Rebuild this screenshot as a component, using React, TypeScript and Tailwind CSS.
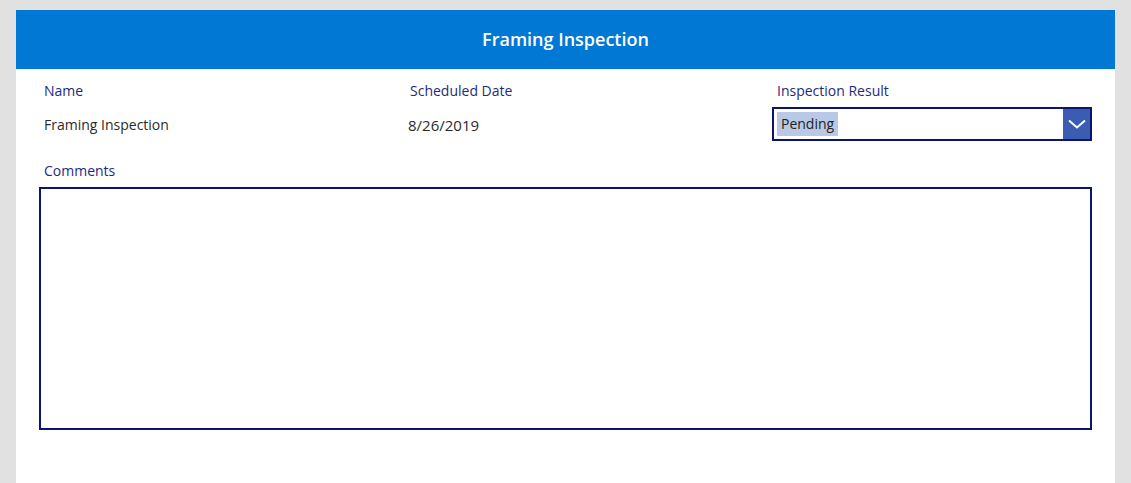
export default function App() {
  return (
    <div className="h-[483px] w-full bg-[#e1e1e1] pt-[10px] pl-[16px] pr-[16px] overflow-hidden" style={{ fontFamily: '"Open Sans", "Noto Sans", sans-serif' }}>
      <div className="h-full bg-white">
        <div className="h-[59px] bg-[#0078d4] flex items-center justify-center">
          <h1 className="text-white text-[18px] font-semibold">Framing Inspection</h1>
        </div>

        <div className="grid grid-cols-[366px_367px_1fr] pl-[28px] pr-[23px] pt-[12px]">
          <div>
            <div className="text-[14px] leading-[20px] text-[#1f2a7c]">Name</div>
            <div className="mt-[14px] text-[14px] leading-[20px] text-[#2a2a2a]">Framing Inspection</div>
          </div>
          <div>
            <div className="text-[14px] leading-[20px] text-[#1f2a7c]">Scheduled Date</div>
            <div className="mt-[14px] -ml-[2px] text-[15px] leading-[20px] text-[#2a2a2a]">8/26/2019</div>
          </div>
          <div>
            <div className="text-[14px] leading-[20px] text-[#1f2a7c]">Inspection Result</div>
            <div className="mt-[6px] -ml-[5px] h-[34px] border-2 border-[#0a1570] flex items-stretch">
              <div className="flex-1 flex items-center pl-[3px]">
                <span className="bg-[#b9c9e5] text-[14px] leading-[24px] px-[4px] text-[#222]">Pending</span>
              </div>
              <div className="w-[27px] bg-[#3a5db3] flex items-center justify-center">
                <svg width="18" height="10" viewBox="0 0 18 10" fill="none">
                  <path d="M1 1.5 L9 8.5 L17 1.5" stroke="white" strokeWidth="2" />
                </svg>
              </div>
            </div>
          </div>
        </div>

        <div className="pl-[28px] pt-[20px]">
          <div className="text-[14px] leading-[20px] text-[#1f2a7c]">Comments</div>
        </div>
        <div className="pl-[23px] pr-[23px] pt-[6px]">
          <textarea className="w-full h-[243px] border-2 border-[#0a1570] resize-none outline-none p-2 text-[14px]" />
        </div>
      </div>
    </div>
  );
}
